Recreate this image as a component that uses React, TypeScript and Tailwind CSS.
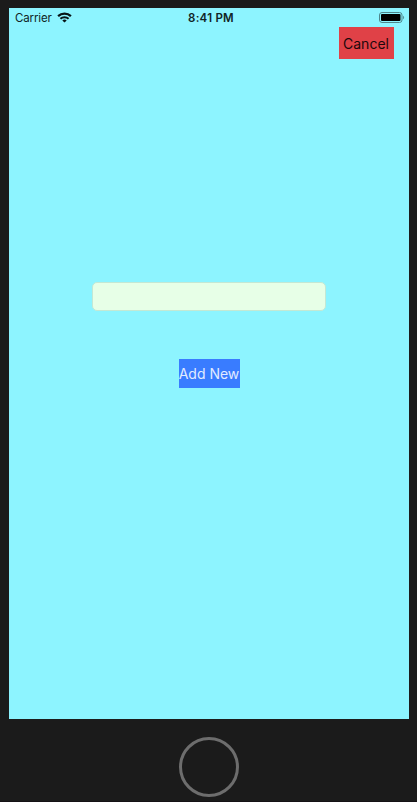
function WifiIcon() {
  return (
    <svg className="ml-[5px] mt-[4px] h-[11px] w-[15px]" viewBox="0 0 15 11" fill="none">
      <path d="M1.1 4.1C4.7.8 10.3.8 13.9 4.1" stroke="#071416" strokeWidth="2.3" />
      <path d="M3.4 6.7C5.7 4.6 9.3 4.6 11.6 6.7" stroke="#071416" strokeWidth="2" />
      <path d="M5.3 8.4C6.5 7.3 8.5 7.3 9.7 8.4L7.5 10.6Z" fill="#071416" />
    </svg>
  );
}

function BatteryIcon() {
  return (
    <svg className="h-[11px] w-[26px]" viewBox="0 0 26 11" fill="none">
      <rect x=".5" y=".5" width="22.5" height="10" rx="2.5" stroke="#4d858b" />
      <rect x="2" y="2" width="19.5" height="7" rx="1" fill="#000" />
      <path d="M24.1 3.8C25.5 4.4 25.5 6.6 24.1 7.2Z" fill="#4d858b" />
    </svg>
  );
}

function StatusBar() {
  return (
    <header className="grid h-[19px] grid-cols-3 text-[#102426]">
      <div className="flex pl-[6px]">
        <span className="mt-[2px] w-[36.5px] whitespace-nowrap text-[11.5px] leading-4 tracking-[-0.14px]">
          Carrier
        </span>
        <WifiIcon />
      </div>
      <span className="mt-[2px] pl-[4px] text-center text-[11.5px] font-semibold leading-4 tracking-[0.24px]">
        8:41 PM
      </span>
      <div className="flex justify-end pr-[4px] pt-[4px]">
        <BatteryIcon />
      </div>
    </header>
  );
}

export default function App() {
  return (
    <div className="flex h-[802px] w-[417px] flex-col border-b border-[#151115] bg-[#1b1b1b] pt-2 font-['Inter','Liberation_Sans',sans-serif]">
      <main className="ml-[9px] flex h-[711px] w-[400px] flex-col items-center bg-[#8df4ff]">
        <div className="w-full">
          <StatusBar />
        </div>
        <button className="mr-[15.5px] flex h-8 w-[55px] items-center justify-center self-end whitespace-nowrap bg-[#e04147] text-[14px] text-[#1d080b]">
          Cancel
        </button>
        <input
          aria-label="Name"
          className="mt-[223px] h-[29px] w-[234px] rounded-[5px] border border-[#c3e8d4] bg-[#e7ffe7] px-2 text-sm outline-none"
        />
        <button className="mt-12 flex h-[29px] w-[61px] items-center justify-center whitespace-nowrap bg-[#397cff] pb-px text-[14px] text-[#e1ebff]">
          Add New
        </button>
      </main>
      <div className="mt-[18px] flex justify-center pl-px">
        <div className="size-[60px] rounded-full border-[3px] border-[#6d6d6d]" />
      </div>
    </div>
  );
}
